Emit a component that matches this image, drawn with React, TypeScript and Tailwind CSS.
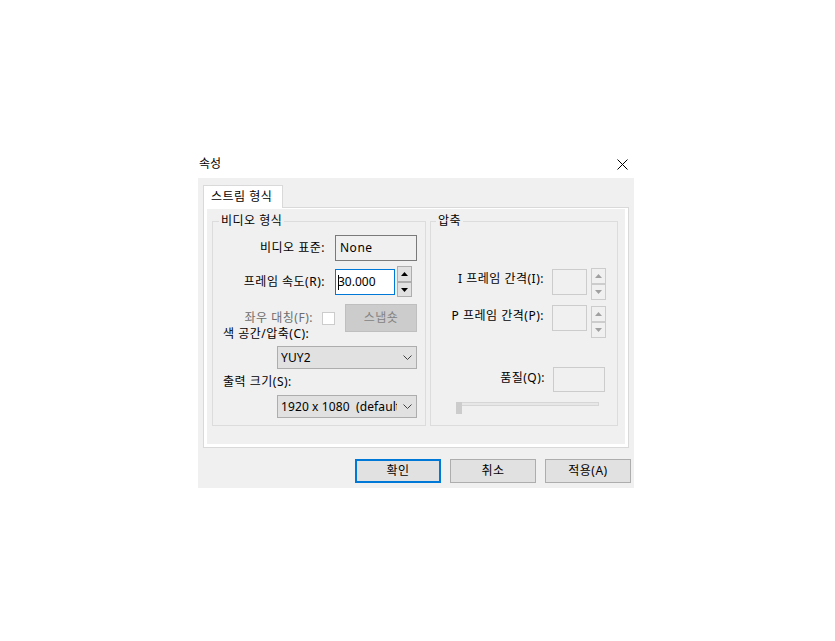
import type { ReactNode } from "react";

function Spinner({ disabled, up, down }: { disabled?: boolean; up: string; down: string }) {
  const box = disabled
    ? "border-[#cccccc] bg-[#f0f0f0]"
    : "border-[#adadad] bg-[#e1e1e1]";
  const fill = disabled ? "#a0a0a0" : "#000000";
  return (
    <div className="flex w-[15px] flex-col">
      <div className={`flex ${up} items-center justify-center border ${box}`}>
        <svg width="7" height="4" viewBox="0 0 7 4">
          <polygon points="3.5,0 7,4 0,4" fill={fill} />
        </svg>
      </div>
      <div className={`flex ${down} items-center justify-center border ${box}`}>
        <svg width="7" height="4" viewBox="0 0 7 4">
          <polygon points="0,0 7,0 3.5,4" fill={fill} />
        </svg>
      </div>
    </div>
  );
}

function Chevron() {
  return (
    <svg width="9" height="5" viewBox="0 0 9 5" className="shrink-0">
      <path d="M0.5 0.5 L4.5 4.5 L8.5 0.5" fill="none" stroke="#404040" strokeWidth="1" />
    </svg>
  );
}

function Select({ children }: { children: ReactNode }) {
  return (
    <div className="ml-[64px] flex h-[23px] w-[140px] items-center justify-between border border-[#adadad] bg-[#e1e1e1] pl-[3px] pr-[4px]">
      <span className="w-[116px] overflow-hidden whitespace-pre tracking-[0.1px]">{children}</span>
      <Chevron />
    </div>
  );
}

function Group({ title, left, className, children }: { title: string; left: string; className: string; children: ReactNode }) {
  return (
    <div className={`relative h-[205px] border border-[#dcdcdc] ${className}`}>
      <span className={`absolute -top-[9px] ${left} bg-[#f0f0f0] px-[2px]`}>{title}</span>
      {children}
    </div>
  );
}

export default function App() {
  return (
    <div className="min-h-[641px] w-full bg-white pl-[198px] pt-[150px] font-['Noto_Sans','Noto_Sans_CJK_KR',sans-serif] text-[12px] leading-[16px] tracking-[0.5px] text-black">
      <div className="w-[436px]">
        {/* Title bar */}
        <div className="flex h-[28px] items-center justify-between pr-[6px]">
          <span className="pl-[1px] tracking-normal">속성</span>
          <svg width="11" height="11" viewBox="0 0 11 11">
            <path d="M0.5 0.5 L10.5 10.5 M10.5 0.5 L0.5 10.5" stroke="#000" strokeWidth="1" />
          </svg>
        </div>

        {/* Body */}
        <div className="flex h-[310px] flex-col bg-[#f0f0f0] pt-[7px]">
          <div className="mx-[5px]">
            <div className="flex">
              <div className="relative z-10 -mb-px h-[23px] w-[80px] border border-b-0 border-[#d9d9d9] bg-white pl-[7px] pt-[3px]">
                스트림 형식
              </div>
            </div>
            <div className="h-[241px] border border-[#d9d9d9] bg-white px-[3px] pb-[3px] pt-[1px]">
              <div className="flex h-[235px] gap-[4px] bg-[#f0f0f0] pl-[5px] pt-[12px]">
                {/* 비디오 형식 */}
                <Group title="비디오 형식" left="left-[6px]" className="w-[214px]">
                  <div className="mt-[13px] flex items-center">
                    <span className="w-[112px] text-right">비디오 표준:</span>
                    <div className="ml-[10px] flex h-[26px] w-[82px] items-center border border-[#7a7a7a] bg-[#f0f0f0] pl-[4px]">
                      None
                    </div>
                  </div>
                  <div className="mt-[5px] flex items-center">
                    <span className="w-[112px] text-right">프레임 속도(R):</span>
                    <div className="relative ml-[10px] flex h-[26px] w-[60px] items-center border border-[#0078d7] bg-white pl-[2px] tracking-normal">
                      30.000
                      <span className="absolute left-[2px] top-[5px] h-[15px] w-px bg-black" />
                    </div>
                    <div className="ml-[2px]">
                      <Spinner up="h-[16px]" down="h-[15px]" />
                    </div>
                  </div>
                  <div className="mt-[7px] flex items-center">
                    <span className="w-[100px] text-right text-[#6d6d6d]">좌우 대칭(F):</span>
                    <div className="ml-[9px] h-[13px] w-[13px] border border-[#cccccc] bg-white" />
                    <div className="ml-[10px] flex h-[28px] w-[72px] items-center justify-center border border-[#bfbfbf] bg-[#cccccc] text-[#838383]">
                      스냅숏
                    </div>
                  </div>
                  <div className="-mt-[6px] pl-[10px]">색 공간/압축(C):</div>
                  <div className="mt-[4px]">
                    <Select>YUY2</Select>
                  </div>
                  <div className="mt-[5px] pl-[10px]">출력 크기(S):</div>
                  <div className="mt-[5px]">
                    <Select>1920 x 1080  (default)</Select>
                  </div>
                </Group>

                {/* 압축 */}
                <Group title="압축" left="left-[5px]" className="w-[188px]">
                  <div className="mt-[46px] flex items-start justify-end pr-[11px]">
                    <span className="mt-[3px]">I 프레임 간격(I):</span>
                    <div className="ml-[8px] mt-[1px] h-[26px] w-[35px] border border-[#cccccc]" />
                    <div className="ml-[4px]">
                      <Spinner disabled up="h-[16px]" down="h-[16px]" />
                    </div>
                  </div>
                  <div className="mt-[5px] flex items-start justify-end pr-[11px]">
                    <span className="mt-[3px]">P 프레임 간격(P):</span>
                    <div className="ml-[8px] h-[26px] w-[35px] border border-[#cccccc]" />
                    <div className="ml-[4px] mt-[1px]">
                      <Spinner disabled up="h-[16px]" down="h-[16px]" />
                    </div>
                  </div>
                  <div className="mt-[29px] flex items-start justify-end pr-[12px]">
                    <span className="mt-[3px]">품질(Q):</span>
                    <div className="ml-[8px] h-[25px] w-[52px] border border-[#cccccc]" />
                  </div>
                  <div className="mt-[10px] pl-[25px]">
                    <div className="relative h-[12px] w-[143px]">
                      <div className="ml-[1px] mt-[4px] h-[4px] w-[142px] border border-[#d6d6d6] bg-[#e7e7e7]" />
                      <div className="absolute left-0 top-0 h-[12px] w-[6px] bg-[#cccccc]" />
                    </div>
                  </div>
                </Group>
              </div>
            </div>
          </div>

          {/* Buttons */}
          <div className="mt-[11px] flex justify-end gap-[9px] pr-[3px]">
            <button className="flex h-[24px] w-[86px] items-center justify-center border-2 border-[#0078d7] bg-[#e1e1e1]">
              확인
            </button>
            <button className="flex h-[24px] w-[86px] items-center justify-center border border-[#adadad] bg-[#e1e1e1]">
              취소
            </button>
            <button className="flex h-[24px] w-[86px] items-center justify-center border border-[#adadad] bg-[#e1e1e1]">
              적용(A)
            </button>
          </div>
        </div>
      </div>
    </div>
  );
}
